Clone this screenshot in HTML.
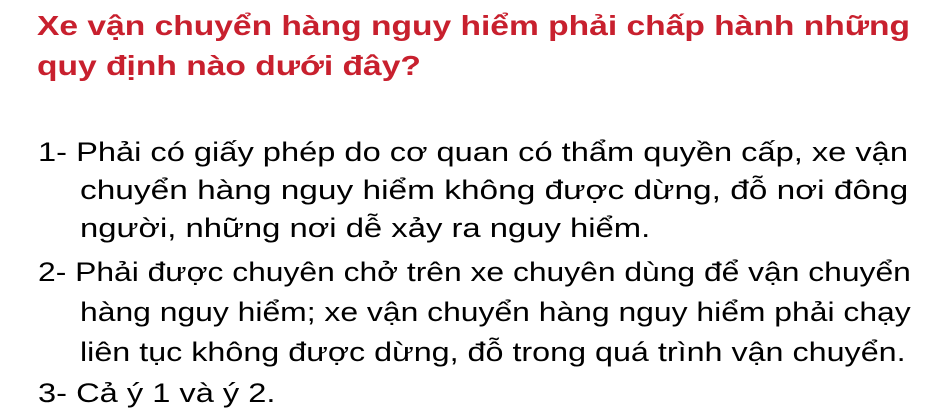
<!DOCTYPE html>
<html><head><meta charset="utf-8"><style>
html,body{margin:0;padding:0;background:#fff;width:945px;height:416px;overflow:hidden}
div{position:absolute;white-space:nowrap;font-family:"Liberation Sans",Arial,sans-serif;line-height:1;transform-origin:0 0}
.t{color:#c8202e;font-weight:bold;font-size:28px;left:37px;transform:scaleX(1.199)}
.b{color:#000;font-size:27px;transform:scaleX(1.208)}
.i{left:80px}.n{left:38px}
</style></head><body>
<div class="t" style="top:12px">Xe vận chuyển hàng nguy hiểm phải chấp hành những</div>
<div class="t" style="top:52px">quy định nào dưới đây?</div>
<div class="b n" style="top:139px">1- Phải có giấy phép do cơ quan có thẩm quyền cấp, xe vận</div>
<div class="b i" style="top:177px;transform:scaleX(1.238)">chuyển hàng nguy hiểm không được dừng, đỗ nơi đông</div>
<div class="b i" style="top:215px;transform:scaleX(1.215)">người, những nơi dễ xảy ra nguy hiểm.</div>
<div class="b n" style="top:259px;transform:scaleX(1.178)">2- Phải được chuyên chở trên xe chuyên dùng để vận chuyển</div>
<div class="b i" style="top:299px;transform:scaleX(1.18)">hàng nguy hiểm; xe vận chuyển hàng nguy hiểm phải chạy</div>
<div class="b i" style="top:339px;transform:scaleX(1.196)">liên tục không được dừng, đỗ trong quá trình vận chuyển.</div>
<div class="b n" style="top:380px">3- Cả ý 1 và ý 2.</div>
</body></html>
